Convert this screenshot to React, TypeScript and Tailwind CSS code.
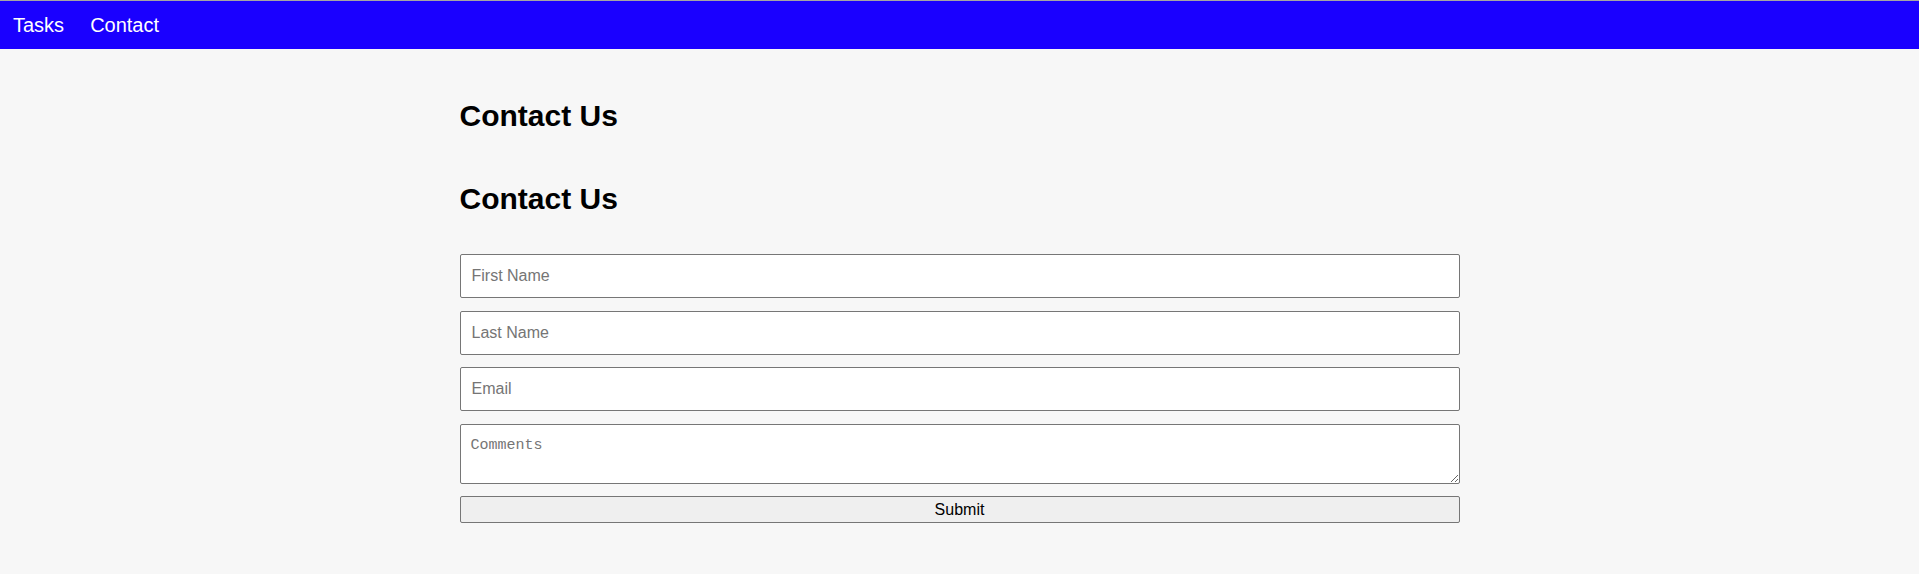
import React from "react";

// Simple contact page: top nav + centered form
const fields = [
  { name: "firstName", placeholder: "First Name", type: "text" },
  { name: "lastName", placeholder: "Last Name", type: "text" },
  { name: "email", placeholder: "Email", type: "email" },
];

const App = () => {
  return (
    <div className="min-h-screen bg-[#f7f7f7] border-t border-[#a5a5a5] font-['Liberation_Sans',Arial,sans-serif] text-black">
      <nav className="h-[48px] bg-[#1a00ff] flex items-center">
        <a href="#" className="px-[13px] text-[20px] text-white">
          Tasks
        </a>
        <a href="#" className="px-[13px] text-[20px] text-white">
          Contact
        </a>
      </nav>

      <main className="w-[1000px] mx-auto pt-[49px] pb-10">
        <h2 className="text-[30px] leading-[36px] font-bold">Contact Us</h2>
        <h2 className="mt-[47px] text-[30px] leading-[36px] font-bold">Contact Us</h2>

        <form className="mt-[37px] flex flex-col gap-[12.5px]" onSubmit={(e) => e.preventDefault()}>
          {fields.map((f) => (
            <input
              key={f.name}
              name={f.name}
              type={f.type}
              placeholder={f.placeholder}
              className="h-[44px] w-full bg-white border border-[#767676] rounded-[2px] px-[11px] text-[16px] placeholder:text-[#757575] outline-none"
            />
          ))}
          <textarea
            name="comments"
            placeholder="Comments"
            className="h-[60px] w-full bg-white border border-[#767676] rounded-[2px] px-[10px] pt-[12px] pb-[4px] text-[15px] leading-[18px] font-['Liberation_Mono','DejaVu_Sans_Mono',monospace] placeholder:text-[#757575] outline-none"
          />
          <button
            type="submit"
            className="h-[27px] w-full bg-[#efefef] border border-[#767676] rounded-[2px] text-[16px] leading-none"
          >
            Submit
          </button>
        </form>
      </main>
    </div>
  );
};

export default App;
